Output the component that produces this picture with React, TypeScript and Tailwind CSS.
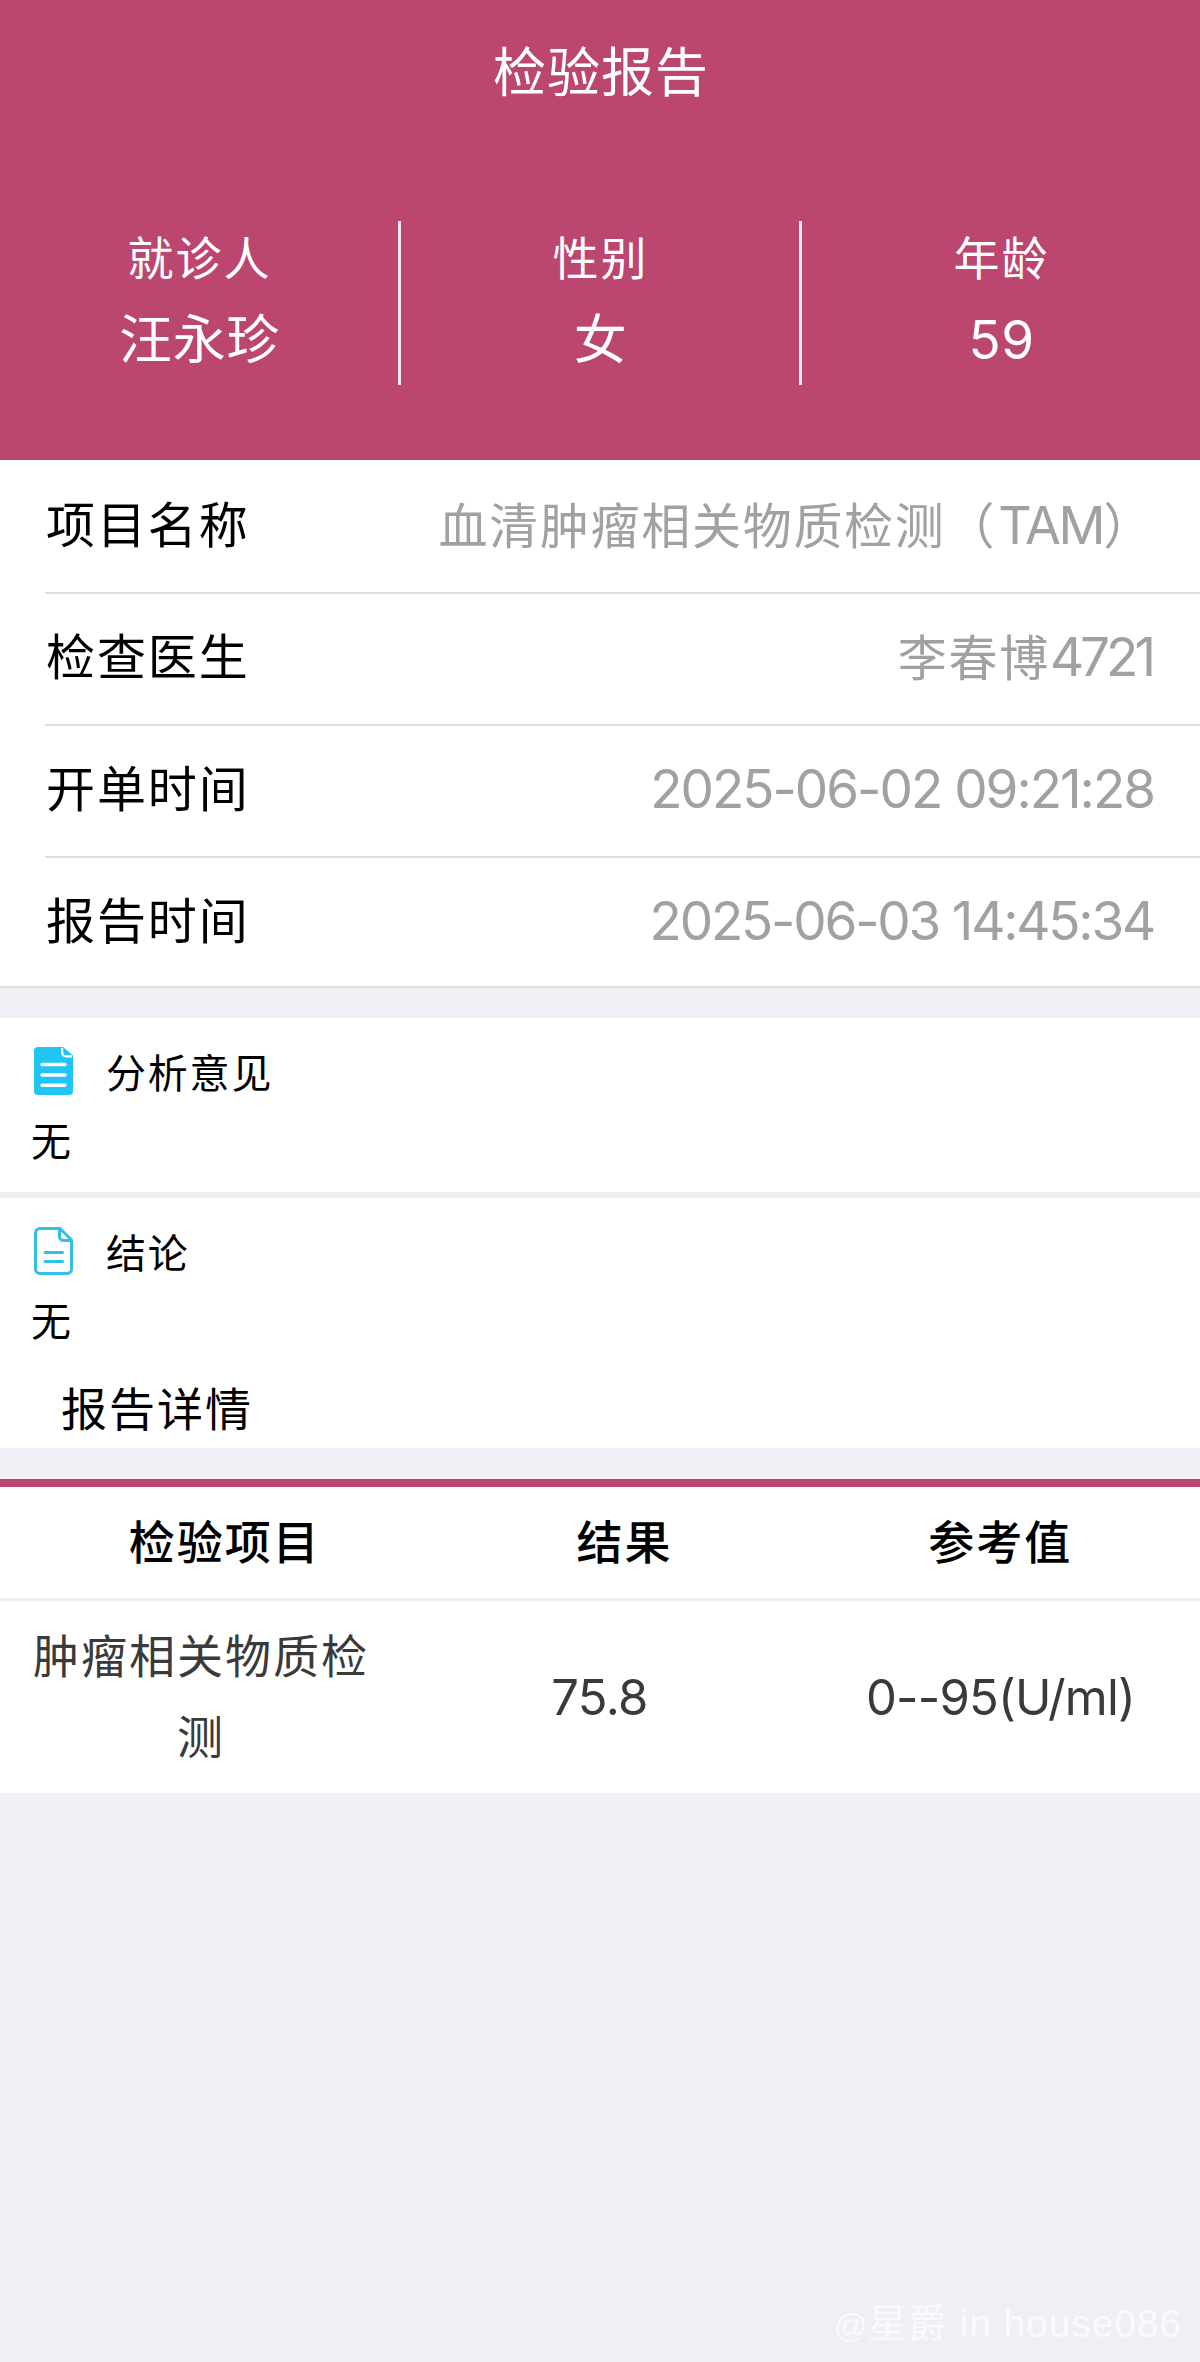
import type { ReactNode } from "react";
import clsx from "clsx";

const PATIENT = [
  { label: "就诊人", value: "汪永珍" },
  { label: "性别", value: "女" },
  { label: "年龄", value: "59" },
];

const ROWS: { label: string; value: ReactNode }[] = [
  {
    label: "项目名称",
    value: (
      <>
        血清肿瘤相关物质检测（<span className="ml-[2px] text-[52px] tracking-[-2.3px]">TAM</span>）
      </>
    ),
  },
  {
    label: "检查医生",
    value: (
      <>
        李春博<span className="mr-[2px] text-[53px] tracking-[-4px]">4721</span>
      </>
    ),
  },
  { label: "开单时间", value: <span className="text-[53px] tracking-[-2px]">2025-06-02 09:21:28</span> },
  { label: "报告时间", value: <span className="text-[53px] tracking-[-2.2px]">2025-06-03 14:45:34</span> },
];

const COLUMNS = ["检验项目", "结果", "参考值"];

const RESULTS = [{ name: "肿瘤相关物质检测", result: "75.8", range: "0--95(U/ml)" }];

function FilledDocIcon() {
  return (
    <svg width="40" height="48" viewBox="0 0 40 48" fill="none" className="block shrink-0">
      <path d="M4 0H29L39 8.5V44a4 4 0 0 1-4 4H4a4 4 0 0 1-4-4V4a4 4 0 0 1 4-4Z" fill="#20c5f5" />
      <path d="M28.2 1V5.5a3.8 3.8 0 0 0 3.8 3.8H38" stroke="#fff" strokeWidth="2.2" />
      <path d="M8 17.5H31M8 28H31M8 38.2H31" stroke="#fff" strokeWidth="3.4" strokeLinecap="round" />
    </svg>
  );
}

function OutlineDocIcon() {
  return (
    <svg
      width="40"
      height="48"
      viewBox="0 0 40 48"
      fill="none"
      stroke="#32bfe9"
      strokeWidth="3"
      strokeLinecap="round"
      strokeLinejoin="round"
      className="block shrink-0"
    >
      <path d="M26 1.5H6A4.5 4.5 0 0 0 1.5 6V42A4.5 4.5 0 0 0 6 46.5H33A4.5 4.5 0 0 0 37.5 42V13Z" />
      <path d="M25.5 2V9.5a4 4 0 0 0 4 4H37" />
      <path d="M11 25.4H28.5M11 34.5H28.5" />
    </svg>
  );
}

function Note({ icon, title, text }: { icon: ReactNode; title: string; text: string }) {
  return (
    <section className="px-[31px] text-[40px] tracking-[1.8px]">
      <div className="flex items-start pt-[29px]">
        <span className="ml-[3px]">{icon}</span>
        <h2 className="ml-8 leading-[54px]">{title}</h2>
      </div>
      <p className="mt-[13px] leading-[56px]">{text}</p>
    </section>
  );
}

export default function App() {
  return (
    <div className="flex min-h-[2362px] w-[1200px] flex-col bg-[#f0eff5] font-[Inter,'Noto_Sans_CJK_SC',sans-serif] text-black">
      <header className="h-[460px] bg-[#bb466f] text-white">
        <h1 className="pt-[37px] pl-[2px] text-center text-[53px] leading-[72px] tracking-[1px]">检验报告</h1>
        <div className="mt-[112px] grid h-[164px] grid-cols-[401px_401px_1fr]">
          {PATIENT.map((p, i) => (
            <div key={p.label} className={clsx("pl-[1px] text-center", i < 2 && "border-r-[3px] border-white/90")}>
              <p className="pt-[7px] text-[46px] leading-[60px] tracking-[2px]">{p.label}</p>
              <p className="mt-[22px] text-[53px] leading-[60px] tracking-[0.5px]">{p.value}</p>
            </div>
          ))}
        </div>
      </header>

      <ul className="border-b-2 border-[#dedee0] bg-white pt-[2px] pl-[45px]">
        {ROWS.map((row, i) => (
          <li
            key={row.label}
            className={clsx(
              "flex items-center justify-between pr-[46px] text-[49px] leading-[128px]",
              i < ROWS.length - 1 ? "h-[132px] border-b-2 border-[#dedede] pb-[2px]" : "h-[128px]",
            )}
          >
            <span className="pl-[1px] tracking-[1.9px]">{row.label}</span>
            <span className="tracking-[1.7px] whitespace-nowrap text-[#a1a1a1]">{row.value}</span>
          </li>
        ))}
      </ul>

      <div className="mt-[30px] bg-white">
        <div className="h-[180px] border-b-[6px] border-[#eeeeee]">
          <Note icon={<FilledDocIcon />} title="分析意见" text="无" />
        </div>
        <div className="h-[250px]">
          <Note icon={<OutlineDocIcon />} title="结论" text="无" />
          <h2 className="mt-[29px] pl-[61px] text-[46px] leading-[60px] tracking-[2px]">报告详情</h2>
        </div>
      </div>

      <div className="mt-[31px] border-t-8 border-[#bb466f] bg-white">
        <div className="flex h-[114px] items-center justify-around border-b-[3px] border-[#eeeeee] pl-[1px] text-[46px] font-medium tracking-[2px]">
          {COLUMNS.map((c) => (
            <span key={c}>{c}</span>
          ))}
        </div>
        {RESULTS.map((r) => (
          <div
            key={r.name}
            className="grid h-[192px] grid-cols-3 items-center text-center leading-[81px] text-[#3a3a3a]"
          >
            <span className="pr-[30px] pl-[32px] text-[46px] tracking-[2px]">{r.name}</span>
            <span className="pr-[1px] text-[49px] tracking-[-0.6px]">{r.result}</span>
            <span className="pl-[1px] text-[49px] tracking-[-0.8px]">{r.range}</span>
          </div>
        ))}
      </div>

      <p className="mt-auto pr-[18px] pb-[8px] text-right font-['Liberation_Sans','Noto_Sans_CJK_SC',sans-serif] text-[39px] leading-[56px] tracking-[0.9px] text-[#fafafc]">
        <span className="text-[33px]">@</span>星爵 in house086
      </p>
    </div>
  );
}
